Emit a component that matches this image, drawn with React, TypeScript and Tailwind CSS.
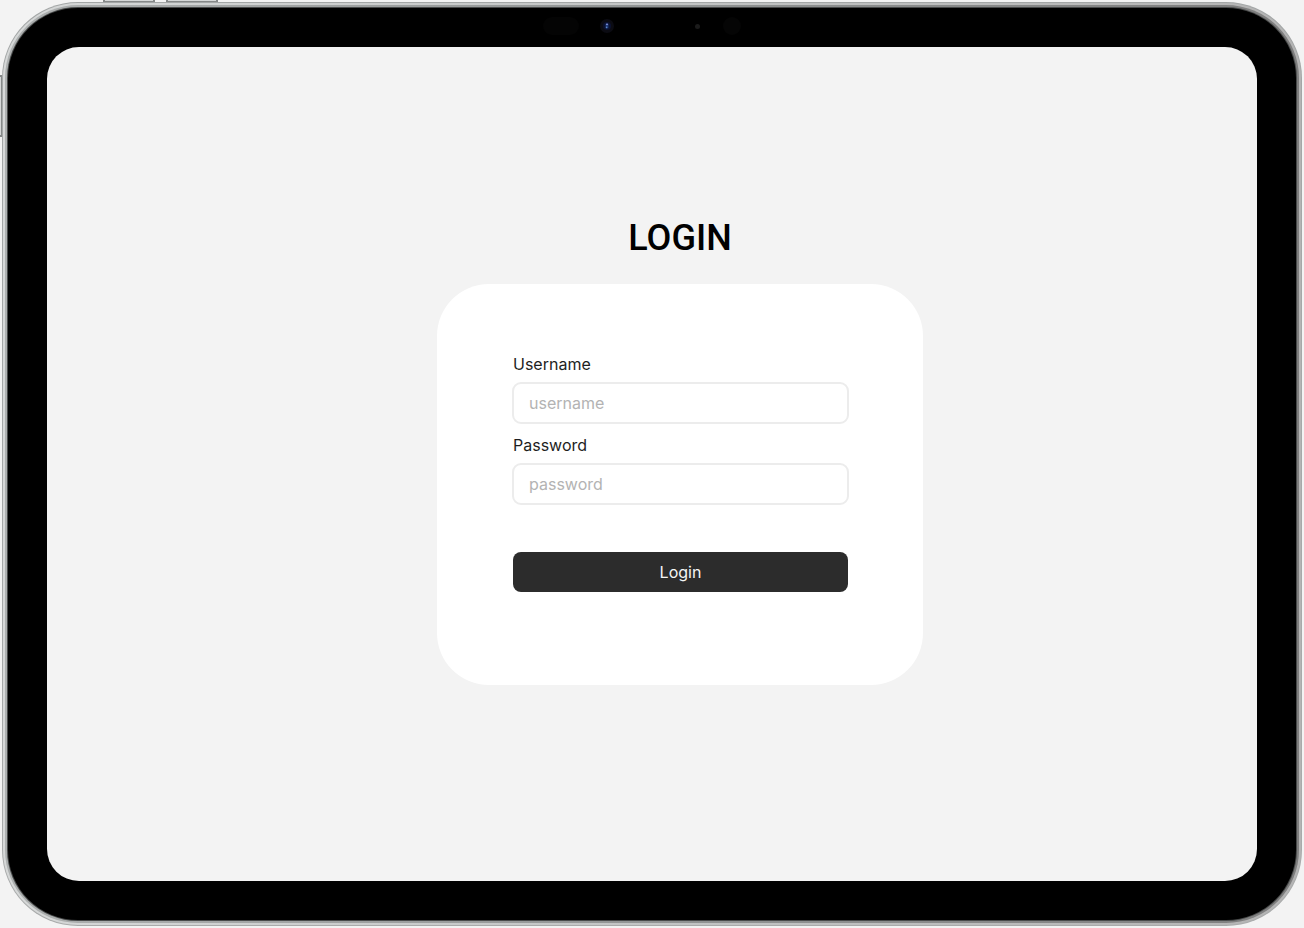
function Field({ id, label, type }: { id: string; label: string; type: string }) {
  return (
    <div className="flex flex-col gap-2">
      <label htmlFor={id} className="pl-px text-base leading-5 text-[#1e1e1e]">
        {label}
      </label>
      <input
        id={id}
        name={id}
        type={type}
        placeholder={id}
        className="h-[42px] w-full rounded-[9px] border-2 border-[#ececec] bg-white px-[15px] text-base text-[#1e1e1e] outline-none placeholder:text-[#b3b3b3]"
      />
    </div>
  );
}

function SideButtons() {
  return (
    <>
      <span className="absolute left-[103px] top-0 h-[2px] w-[52px] border-x-2 border-b border-[#858888] bg-[#d5d7d7]" />
      <span className="absolute left-[166px] top-0 h-[2px] w-[52px] border-x-2 border-b border-[#858888] bg-[#d5d7d7]" />
      <span className="absolute left-0 top-[75px] h-[62px] w-[2px] border-y-2 border-r border-[#858888] bg-[#d5d7d7]" />
    </>
  );
}

function Sensors() {
  return (
    <div className="absolute left-1/2 top-2 flex h-5 w-[218px] -translate-x-1/2 items-center">
      <span className="h-[18px] w-9 rounded-full bg-[#040404]" />
      <svg className="ml-[21px] h-[14px] w-[14px]" viewBox="0 0 14 14" aria-hidden="true">
        <circle cx="7" cy="7" r="7" fill="#0b0b12" />
        <circle cx="7" cy="7" r="4" fill="#0b1230" />
        <rect x="5.5" y="4.5" width="3" height="5" rx="1" fill="#1b3470" />
        <circle cx="7" cy="5.3" r="0.9" fill="#8a9ae8" />
        <circle cx="6.6" cy="8.4" r="0.8" fill="#5a86c8" />
      </svg>
      <span className="ml-[81px] h-[5px] w-[5px] rounded-full bg-[#1b1b1b]" />
      <span className="ml-[23px] h-[18px] w-[18px] rounded-full bg-[#050505]" />
    </div>
  );
}

export default function App() {
  return (
    <div className="relative flex min-h-screen bg-[#f3f3f3] p-[2px] font-['Inter',sans-serif]">
      <SideButtons />
      <div className="flex flex-1 rounded-[76px] bg-linear-to-b from-[#a3a6a6] to-[#a9abab] p-px">
        <div className="flex flex-1 rounded-[75px] bg-linear-to-r from-[#d6d8d8] via-[#c2c4c4] to-[#b4b4b4] p-[2px]">
          <div className="flex flex-1 rounded-[73px] bg-linear-to-r from-[#adb0b0] via-[#919494] to-[#7e7e7e] p-[2px]">
            <div className="flex flex-1 rounded-[71px] bg-[#484a4a] p-px">
              <div className="relative flex flex-1 rounded-[70px] bg-black p-[39px]">
                <Sensors />
                <main className="flex flex-1 flex-col items-center justify-center rounded-[32px] bg-[#f3f3f3] pb-[27px] pl-14">
                  <h1 className="mb-6 font-['Roboto',sans-serif] text-4xl leading-[44px] font-medium text-black">
                    LOGIN
                  </h1>
                  <form
                    className="flex w-full max-w-[486px] flex-col gap-[11px] rounded-[52px] bg-white pt-[70px] pr-[74px] pb-[93px] pl-[75px]"
                    onSubmit={(event) => event.preventDefault()}
                  >
                    <Field id="username" label="Username" type="text" />
                    <Field id="password" label="Password" type="password" />
                    <button
                      type="submit"
                      className="mx-px mt-9 h-10 rounded-lg bg-[#2c2c2c] text-base text-[#f5f5f5]"
                    >
                      Login
                    </button>
                  </form>
                </main>
              </div>
            </div>
          </div>
        </div>
      </div>
    </div>
  );
}
